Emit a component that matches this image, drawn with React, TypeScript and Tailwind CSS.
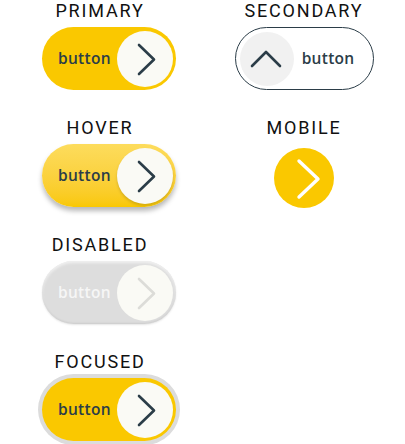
import React from "react";

const label = "block w-full text-center text-[18px] leading-[22px] tracking-[1.8px] text-[#111]";
const btnText = "text-[15.5px] font-semibold tracking-[0.3px]";

function ChevronRight({ color }: { color: string }) {
  return (
    <svg width="56" height="56" viewBox="0 0 56 56" fill="none">
      <polyline points="22,14 37,28.5 22,43" stroke={color} strokeWidth="2.6" strokeLinecap="round" strokeLinejoin="round" />
    </svg>
  );
}

function PillButton({ variant }: { variant: "primary" | "hover" | "disabled" | "focused" }) {
  const base = "flex items-center justify-between w-[134px] h-[63px] rounded-full pl-[16px] pr-[3px]";
  const bg =
    variant === "hover"
      ? "bg-gradient-to-b from-[#fddc5c] to-[#f9c800] shadow-[0_4px_5px_rgba(0,0,0,0.28)]"
      : variant === "disabled"
      ? "bg-[#dddddd] shadow-[inset_0_2px_3px_rgba(255,255,255,0.6),inset_0_-1px_2px_rgba(0,0,0,0.08),0_1px_2px_rgba(0,0,0,0.1)]"
      : variant === "focused"
      ? "bg-[#fac800] ring-4 ring-[#dcdcdc]"
      : "bg-[#fac800]";
  const disabled = variant === "disabled";
  return (
    <div className={`${base} ${bg}`}>
      <span className={`${btnText} ${disabled ? "text-[#f6f6f6]" : "text-[#2b3d48]"}`}>button</span>
      <div
        className={`w-[56px] h-[56px] rounded-full bg-[#fafaf5] flex items-center justify-center ${
          variant === "hover" ? "shadow-[0_2px_3px_rgba(0,0,0,0.15)]" : ""
        }`}
      >
        <ChevronRight color={disabled ? "#dcdcd8" : "#2b3d48"} />
      </div>
    </div>
  );
}

export default function App() {
  return (
    <div className="w-[405px] h-[444px] bg-white flex overflow-hidden" style={{ fontFamily: "Roboto, 'Liberation Sans', sans-serif" }}>
      {/* left column */}
      <div className="w-[200px] shrink-0 flex flex-col">
        {(["primary", "hover", "disabled", "focused"] as const).map((v) => (
          <div key={v} className="flex flex-col h-[117px] shrink-0">
            <span className={label}>{v === "primary" ? "PRIMARY" : v === "hover" ? "HOVER" : v === "disabled" ? "DISABLED" : "FOCUSED"}</span>
            <div className="mt-[5px] ml-[42px]" style={{ fontFamily: "'Open Sans', 'Liberation Sans', sans-serif" }}>
              <PillButton variant={v} />
            </div>
          </div>
        ))}
      </div>

      {/* right column */}
      <div className="w-[196px] ml-[6px] shrink-0 flex flex-col">
        <div className="flex flex-col items-center h-[117px] shrink-0">
          <span className={label}>SECONDARY</span>
          <div
            className="mt-[5px] w-[139px] h-[63px] rounded-full border border-[#2b3d48] flex items-center justify-between pl-[4px] pr-[18px]"
            style={{ fontFamily: "'Open Sans', 'Liberation Sans', sans-serif" }}
          >
            <div className="w-[54px] h-[54px] rounded-full bg-[#f1f1f1] flex items-center justify-center">
              <svg width="54" height="54" viewBox="0 0 54 54" fill="none">
                <polyline points="12,34 26,20 40,34" stroke="#2b3d48" strokeWidth="2.6" strokeLinecap="round" strokeLinejoin="round" />
              </svg>
            </div>
            <span className={`${btnText} text-[#2b3d48]`}>button</span>
          </div>
        </div>
        <div className="flex flex-col items-center">
          <span className={label}>MOBILE</span>
          <div className="mt-[9px] w-[60px] h-[60px] rounded-full bg-[#fac800] flex items-center justify-center">
            <svg width="60" height="60" viewBox="0 0 60 60" fill="none">
              <polyline points="25,13 44,31 25,49" stroke="#ffffff" strokeWidth="3.4" strokeLinecap="round" strokeLinejoin="round" />
            </svg>
          </div>
        </div>
      </div>
    </div>
  );
}
